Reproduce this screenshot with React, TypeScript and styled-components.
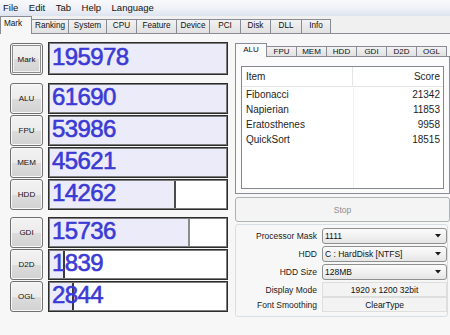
import React from 'react';
import styled, { createGlobalStyle } from 'styled-components';

const SANS = `"Liberation Sans", Arial, sans-serif`;

const GlobalStyle = createGlobalStyle`
  html, body { margin: 0; padding: 0; background: #f0f0f0; }
  body { font-family: ${SANS}; color: #000; }
  * { box-sizing: border-box; }
`;

const Window = styled.div`
  width: 450px;
  height: 335px;
  overflow: hidden;
  display: flex;
  flex-direction: column;
  background: #f0f0f0;
`;

const MenuBar = styled.div`
  height: 16px;
  flex: none;
  display: flex;
  align-items: center;
  gap: 10.5px;
  padding-left: 3px;
  background: linear-gradient(#f8f9fc 0%, #eef1f7 55%, #dde3ee 100%);
  font-size: 9.5px;
`;

const MenuItem = styled.span`
  line-height: 16px;
  color: #111;
`;

const TopTabs = styled.div`
  height: 18px;
  flex: none;
  display: flex;
  align-items: flex-end;
  border-bottom: 1px solid #898c95;
`;

const TopTab = styled.div<{ $w: number; $active?: boolean }>`
  width: ${(p) => p.$w + 1}px;
  height: ${(p) => (p.$active ? 18 : 14)}px;
  margin-right: -1px;
  margin-bottom: ${(p) => (p.$active ? -1 : 0)}px;
  position: relative;
  z-index: ${(p) => (p.$active ? 1 : 0)};
  border: 1px solid #898c95;
  border-bottom: none;
  background: ${(p) => (p.$active ? '#f7f7f7' : 'linear-gradient(#f2f2f2, #e1e1e1)')};
  font-size: 8.2px;
  line-height: ${(p) => (p.$active ? 14 : 12)}px;
  text-align: ${(p) => (p.$active ? 'left' : 'center')};
  padding-left: ${(p) => (p.$active ? 3 : 0)}px;
  white-space: nowrap;
  color: #111;
`;

const TabPage = styled.div`
  flex: 1;
  display: flex;
  background: #f7f7f7;
  padding: 8px 0 0 10px;
`;

const LeftCol = styled.div`
  width: 218px;
  flex: none;
  display: flex;
  flex-direction: column;
`;

const ScoreGroup = styled.div<{ $mt: number }>`
  display: flex;
  flex-direction: column;
  gap: 1px;
  margin-top: ${(p) => p.$mt}px;
`;

const ScoreRow = styled.div<{ $h: number }>`
  height: ${(p) => p.$h}px;
  display: flex;
  align-items: flex-end;
  gap: 5px;
`;

const SideButton = styled.div<{ $focus?: boolean; $h: number }>`
  width: 33px;
  height: ${(p) => p.$h}px;
  flex: none;
  display: flex;
  align-items: center;
  justify-content: center;
  border: 1px solid #707070;
  border-radius: 3px;
  background: linear-gradient(#f3f3f3 0%, #ebebeb 50%, #dcdcdc 51%, #d2d2d2 100%);
  box-shadow: ${(p) =>
    p.$focus ? 'inset 0 0 0 1px #fafafa, inset 0 0 0 2px #8a8a8a, inset 0 0 0 3px #f2f2f2' : 'inset 0 0 0 1px #f8f8f8'};
  font-size: 8px;
  color: #111;
`;

const ScoreBox = styled.div<{ $fill: number | null; $line: string }>`
  flex: 1;
  height: 100%;
  display: flex;
  align-items: center;
  padding-left: 3px;
  border: 1px solid #2c2c2c;
  box-shadow: inset 0 0 0 1px #7c7c7c;
  background: ${(p) =>
    p.$fill === null
      ? '#ebebfa'
      : `linear-gradient(to right, #ebebfa 0 ${p.$fill}px, ${p.$line} ${p.$fill}px ${p.$fill + 2}px, #ffffff ${p.$fill + 2}px)`};
`;

const ScoreValue = styled.span`
  font-size: 24px;
  letter-spacing: -0.6px;
  color: #3b3bd4;
  -webkit-text-stroke: 0.6px #3b3bd4;
  line-height: 24px;
  margin-top: -3px;
`;

const RightCol = styled.div`
  width: 215px;
  flex: none;
  margin-left: 7px;
  padding-top: 1px;
  display: flex;
  flex-direction: column;
`;

const InnerTabs = styled.div`
  height: 13px;
  display: flex;
  align-items: flex-end;
`;

const InnerTab = styled.div<{ $active?: boolean }>`
  width: ${(p) => (p.$active ? 32 : 31)}px;
  height: ${(p) => (p.$active ? 14 : 10)}px;
  margin-right: -1px;
  margin-bottom: ${(p) => (p.$active ? -1 : 0)}px;
  position: relative;
  z-index: ${(p) => (p.$active ? 1 : 0)};
  border: 1px solid #898c95;
  border-bottom: none;
  background: ${(p) => (p.$active ? '#fbfbfb' : 'linear-gradient(#f2f2f2, #e1e1e1)')};
  font-size: 8px;
  line-height: ${(p) => (p.$active ? 11 : 9)}px;
  text-align: center;
  color: #111;
`;

const Panel = styled.div`
  height: 138px;
  border: 1px solid #898c95;
  background: #fbfbfb;
  padding: 9px 5px 4px 5px;
  display: flex;
`;

const ListView = styled.div`
  flex: 1;
  border: 1px solid #828790;
  background: linear-gradient(to right, #ffffff 111px, #f0f0f0 111px, #f0f0f0 112px, #ffffff 112px);
  font-size: 10px;
  display: flex;
  flex-direction: column;
`;

const ListRow = styled.div<{ $header?: boolean }>`
  display: grid;
  grid-template-columns: 111px 1fr;
  height: ${(p) => (p.$header ? 20 : 15)}px;
  align-items: center;
  background: ${(p) => (p.$header ? '#ffffff' : 'transparent')};
  border-bottom: ${(p) => (p.$header ? '1px solid #e5e5e5' : 'none')};
`;

const Cell = styled.div<{ $right?: boolean; $header?: boolean }>`
  padding: ${(p) => (p.$right ? '0 3px 0 0' : '0 0 0 4px')};
  height: 100%;
  display: flex;
  align-items: center;
  justify-content: ${(p) => (p.$right ? 'flex-end' : 'flex-start')};
  border-right: ${(p) => (p.$header && !p.$right ? '1px solid #e5e5e5' : 'none')};
  color: #1e1e1e;
`;

const StopButton = styled.div`
  margin-top: 3px;
  height: 25px;
  border: 1px solid #adb2b5;
  border-radius: 3px;
  background: #f4f4f4;
  display: flex;
  align-items: center;
  justify-content: center;
  font-size: 8.5px;
  color: #8d8d8d;
`;

const Settings = styled.div`
  margin-top: 2px;
  width: 213px;
  height: 93px;
  border: 1px solid #d5dfe5;
  border-radius: 3px;
  padding-top: 3px;
  display: grid;
  grid-template-columns: 81px 125px;
  grid-template-rows: 18px 18px 18px 15px 15px;
  column-gap: 5px;
  font-size: 8.5px;
`;

const Label = styled.div<{ $h: number }>`
  height: ${(p) => p.$h}px;
  display: flex;
  align-items: center;
  justify-content: flex-end;
  color: #1a1a1a;
`;

const Combo = styled.div`
  height: 16px;
  border: 1px solid #8e8f8f;
  border-radius: 3px;
  background: linear-gradient(#fbfbfb 0%, #f1f1f1 50%, #e6e6e6 100%);
  display: flex;
  align-items: center;
  justify-content: space-between;
  padding: 0 5px 0 2px;
  color: #111;
`;

const ValueBox = styled.div`
  height: 15px;
  border: 1px solid #dedede;
  background: #f3f3f3;
  display: flex;
  align-items: center;
  justify-content: center;
  color: #111;
`;

const Arrow = () => (
  <svg width="6" height="4" viewBox="0 0 6 4">
    <polygon points="0,0 6,0 3,3.5" fill="#1a1a1a" />
  </svg>
);

const menu = ['File', 'Edit', 'Tab', 'Help', 'Language'];
const topTabs: [string, number][] = [
  ['Mark', 31],
  ['Ranking', 37],
  ['System', 38],
  ['CPU', 30],
  ['Feature', 40],
  ['Device', 33],
  ['PCI', 31],
  ['Disk', 30],
  ['DLL', 31],
  ['Info', 29],
];

type Score = { name: string; value: string; fill: number | null; line: string };
const group1: Score[] = [
  { name: 'ALU', value: '61690', fill: null, line: '' },
  { name: 'FPU', value: '53986', fill: null, line: '' },
  { name: 'MEM', value: '45621', fill: null, line: '' },
  { name: 'HDD', value: '14262', fill: 125, line: '#4a4a4a' },
];
const group2: Score[] = [
  { name: 'GDI', value: '15736', fill: 139, line: '#8c8c8c' },
  { name: 'D2D', value: '1839', fill: 14, line: '#3a3a3a' },
  { name: 'OGL', value: '2844', fill: 23, line: '#3a3a3a' },
];

const innerTabs = ['ALU', 'FPU', 'MEM', 'HDD', 'GDI', 'D2D', 'OGL'];
const items: [string, string][] = [
  ['Fibonacci', '21342'],
  ['Napierian', '11853'],
  ['Eratosthenes', '9958'],
  ['QuickSort', '18515'],
];

const renderRow = (s: Score) => (
  <ScoreRow key={s.name} $h={31}>
    <SideButton $h={31}>{s.name}</SideButton>
    <ScoreBox $fill={s.fill} $line={s.line}>
      <ScoreValue>{s.value}</ScoreValue>
    </ScoreBox>
  </ScoreRow>
);

export default function App() {
  return (
    <Window>
      <GlobalStyle />
      <MenuBar>
        {menu.map((m) => (
          <MenuItem key={m}>{m}</MenuItem>
        ))}
      </MenuBar>
      <TopTabs>
        {topTabs.map(([t, w], i) => (
          <TopTab key={t} $w={w} $active={i === 0}>
            {t}
          </TopTab>
        ))}
      </TopTabs>
      <TabPage>
        <LeftCol>
          <ScoreRow $h={33}>
            <SideButton $focus $h={32}>Mark</SideButton>
            <ScoreBox $fill={null} $line="">
              <ScoreValue>195978</ScoreValue>
            </ScoreBox>
          </ScoreRow>
          <ScoreGroup $mt={8}>{group1.map(renderRow)}</ScoreGroup>
          <ScoreGroup $mt={7}>{group2.map(renderRow)}</ScoreGroup>
        </LeftCol>
        <RightCol>
          <InnerTabs>
            {innerTabs.map((t, i) => (
              <InnerTab key={t} $active={i === 0}>
                {t}
              </InnerTab>
            ))}
          </InnerTabs>
          <Panel>
            <ListView>
              <ListRow $header>
                <Cell $header>Item</Cell>
                <Cell $header $right>
                  Score
                </Cell>
              </ListRow>
              {items.map(([n, v]) => (
                <ListRow key={n}>
                  <Cell>{n}</Cell>
                  <Cell $right>{v}</Cell>
                </ListRow>
              ))}
            </ListView>
          </Panel>
          <StopButton>Stop</StopButton>
          <Settings>
            <Label $h={16}>Processor Mask</Label>
            <Combo>
              <span>1111</span>
              <Arrow />
            </Combo>
            <Label $h={16}>HDD</Label>
            <Combo>
              <span>C : HardDisk [NTFS]</span>
              <Arrow />
            </Combo>
            <Label $h={16}>HDD Size</Label>
            <Combo>
              <span>128MB</span>
              <Arrow />
            </Combo>
            <Label $h={15}>Display Mode</Label>
            <ValueBox>1920 x 1200 32bit</ValueBox>
            <Label $h={15}>Font Smoothing</Label>
            <ValueBox>ClearType</ValueBox>
          </Settings>
        </RightCol>
      </TabPage>
    </Window>
  );
}
